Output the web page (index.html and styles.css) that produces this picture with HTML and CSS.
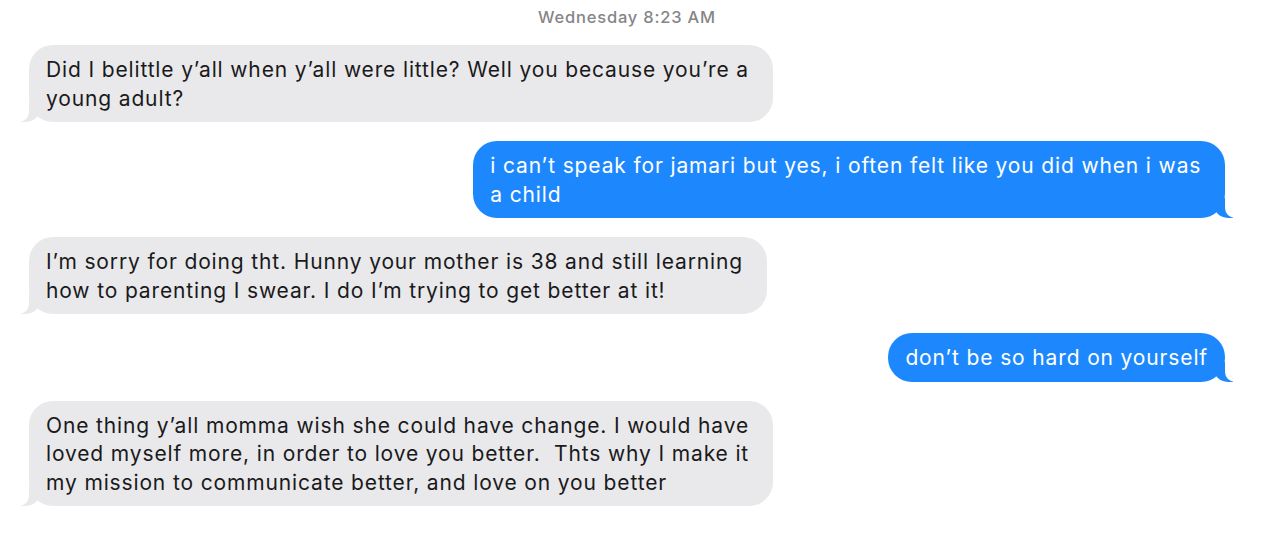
FILE: index.html
```html
<!DOCTYPE html>
<html lang="en">
<head>
<meta charset="utf-8">
<title>Messages</title>
<link rel="stylesheet" href="styles.css">
</head>
<body>
<main class="thread">
  <div class="stamp"><span class="stamp-day">Wednesday</span> 8:23 AM</div>
  <div class="row row-in"><div class="bubble in">Did I belittle y’all when y’all were little? Well you because you’re a&nbsp;<br>young adult?</div></div>
  <div class="row row-out"><div class="bubble out">i can’t speak for jamari but yes, i often felt like you did when i was&nbsp;<br>a child</div></div>
  <div class="row row-in"><div class="bubble in">I’m sorry for doing tht. Hunny your mother is 38 and still learning&nbsp;<br>how to parenting I swear. I do I’m trying to get better at it!</div></div>
  <div class="row row-out"><div class="bubble out">don’t be so hard on yourself</div></div>
  <div class="row row-in"><div class="bubble in">One thing y’all momma wish she could have change. I would have&nbsp;<br>loved myself more, in order to love you better.&nbsp; Thts why I make it&nbsp;<br>my mission to communicate better, and love on you better</div></div>
</main>
</body>
</html>
```

FILE: styles.css
```css
* { box-sizing: border-box; }
html, body { margin: 0; background: #ffffff; }
body {
  width: 1288px;
  height: 548px;
  overflow: hidden;
  font-family: Inter, "Noto Sans", "Liberation Sans", sans-serif;
}
.thread {
  display: flex;
  flex-direction: column;
  gap: 19px;
  padding: 0 63px 0 29px;
}
.stamp {
  text-align: center;
  color: #858587;
  font-size: 16.5px;
  font-weight: 500;
  letter-spacing: 0.8px;
  line-height: 22px;
  padding-top: 6px;
  margin-bottom: -2px;
}
.row { display: flex; }
.row-in { justify-content: flex-start; }
.row-out { justify-content: flex-end; }
.bubble {
  position: relative;
  padding: 11px 17px 9px 17px;
  border-radius: 24px;
  font-size: 21px;
  letter-spacing: 0.86px;
  line-height: 28.5px;
  white-space: nowrap;
}
.in { background: #e9e9eb; color: #1a1a1c; }
.out { background: #1d88fe; color: #ffffff; }
.bubble::before,
.bubble::after {
  content: "";
  position: absolute;
  bottom: 0;
  height: 20px;
}
.in::before {
  left: -8px;
  width: 20px;
  background: #e9e9eb;
  border-bottom-right-radius: 15px;
}
.in::after {
  left: -26px;
  width: 26px;
  background: #ffffff;
  border-bottom-right-radius: 10px;
}
.out::before {
  right: -8px;
  width: 20px;
  background: #1d88fe;
  border-bottom-left-radius: 15px;
}
.out::after {
  right: -26px;
  width: 26px;
  background: #ffffff;
  border-bottom-left-radius: 10px;
}
```
